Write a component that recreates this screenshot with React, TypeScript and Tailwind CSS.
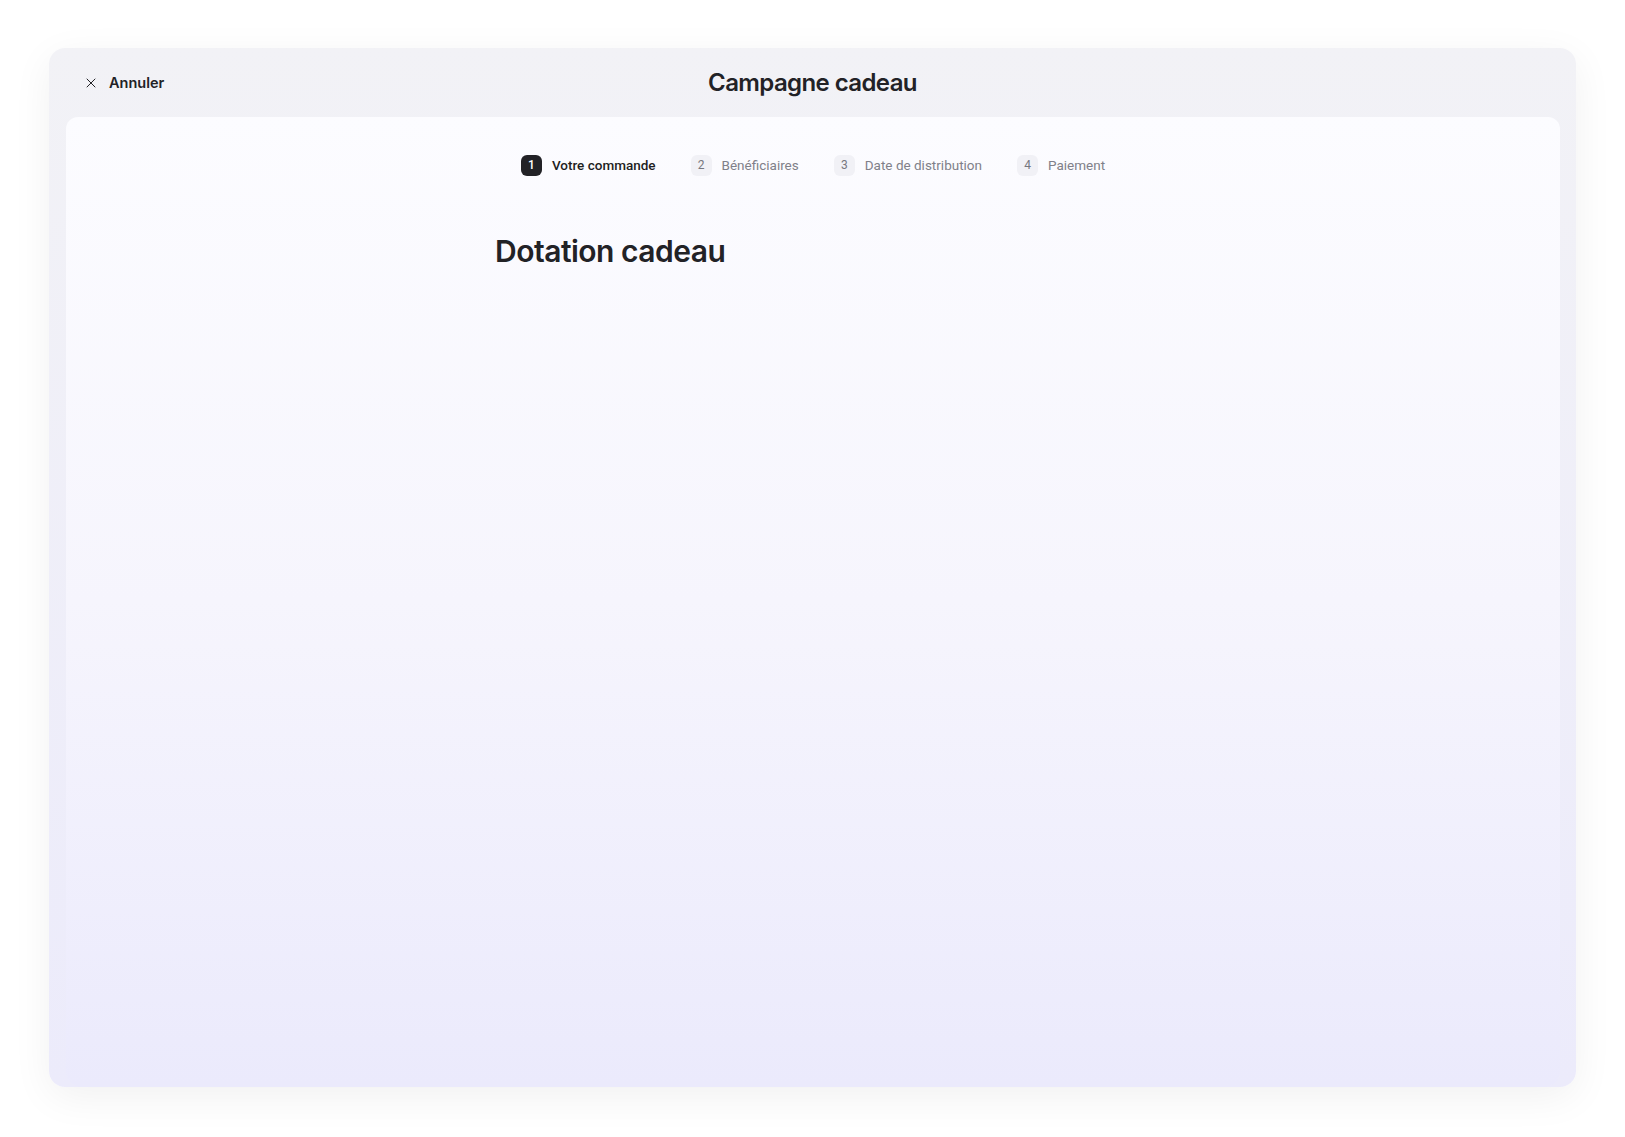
import { X } from "lucide-react";

const steps = [
  { n: 1, label: "Votre commande" },
  { n: 2, label: "Bénéficiaires" },
  { n: 3, label: "Date de distribution" },
  { n: 4, label: "Paiement" },
];

function Stepper() {
  return (
    <ol className="flex items-center gap-[35px] font-['Roboto',sans-serif] text-[13.5px] leading-[21px]">
      {steps.map((s) => {
        const active = s.n === 1;
        return (
          <li key={s.n} className="flex items-center gap-[10px]">
            <span
              className={
                active
                  ? "flex h-[21px] w-[21px] items-center justify-center rounded-[6px] bg-[#222226] text-[12px] font-medium text-white"
                  : "flex h-[21px] w-[21px] items-center justify-center rounded-[6px] bg-[#f1f1f6] text-[12px] text-[#77777f]"
              }
            >
              {s.n}
            </span>
            <span className={active ? "font-medium text-[#1e1e22]" : "text-[#808089]"}>
              {s.label}
            </span>
          </li>
        );
      })}
    </ol>
  );
}

export default function App() {
  return (
    <div className="min-h-screen w-full bg-white pl-[49px] pt-[48px] font-['Inter',sans-serif]">
      <div className="flex h-[1039px] w-[1527px] flex-col rounded-[16px] bg-gradient-to-b from-[#f2f2f6] to-[#ecebfb] shadow-[0_10px_40px_rgba(0,0,0,0.06)]">
        <header className="relative flex h-[69px] items-center px-[34px]">
          <button type="button" className="mt-[1px] flex items-center gap-[10px] text-[14.5px] font-semibold text-[#222226]">
            <X size={16} strokeWidth={1.5} />
            Annuler
          </button>
          <h1 className="absolute left-1/2 -translate-x-1/2 text-[24px] font-semibold tracking-[-0.6px] text-[#222226]">
            Campagne cadeau
          </h1>
        </header>
        <main className="ml-[17px] mr-4 flex-1 rounded-t-[12px] rounded-b-[16px] bg-gradient-to-b from-[#fcfcff] via-[#f6f5fd] to-[#ebeafc]">
          <div className="flex justify-center pt-[38px]">
            <Stepper />
          </div>
          <div className="pl-[429px] pt-[57px]">
            <h2 className="text-[30px] font-semibold leading-[36px] tracking-[-0.5px] text-[#222226]">Dotation cadeau</h2>
          </div>
        </main>
      </div>
    </div>
  );
}
